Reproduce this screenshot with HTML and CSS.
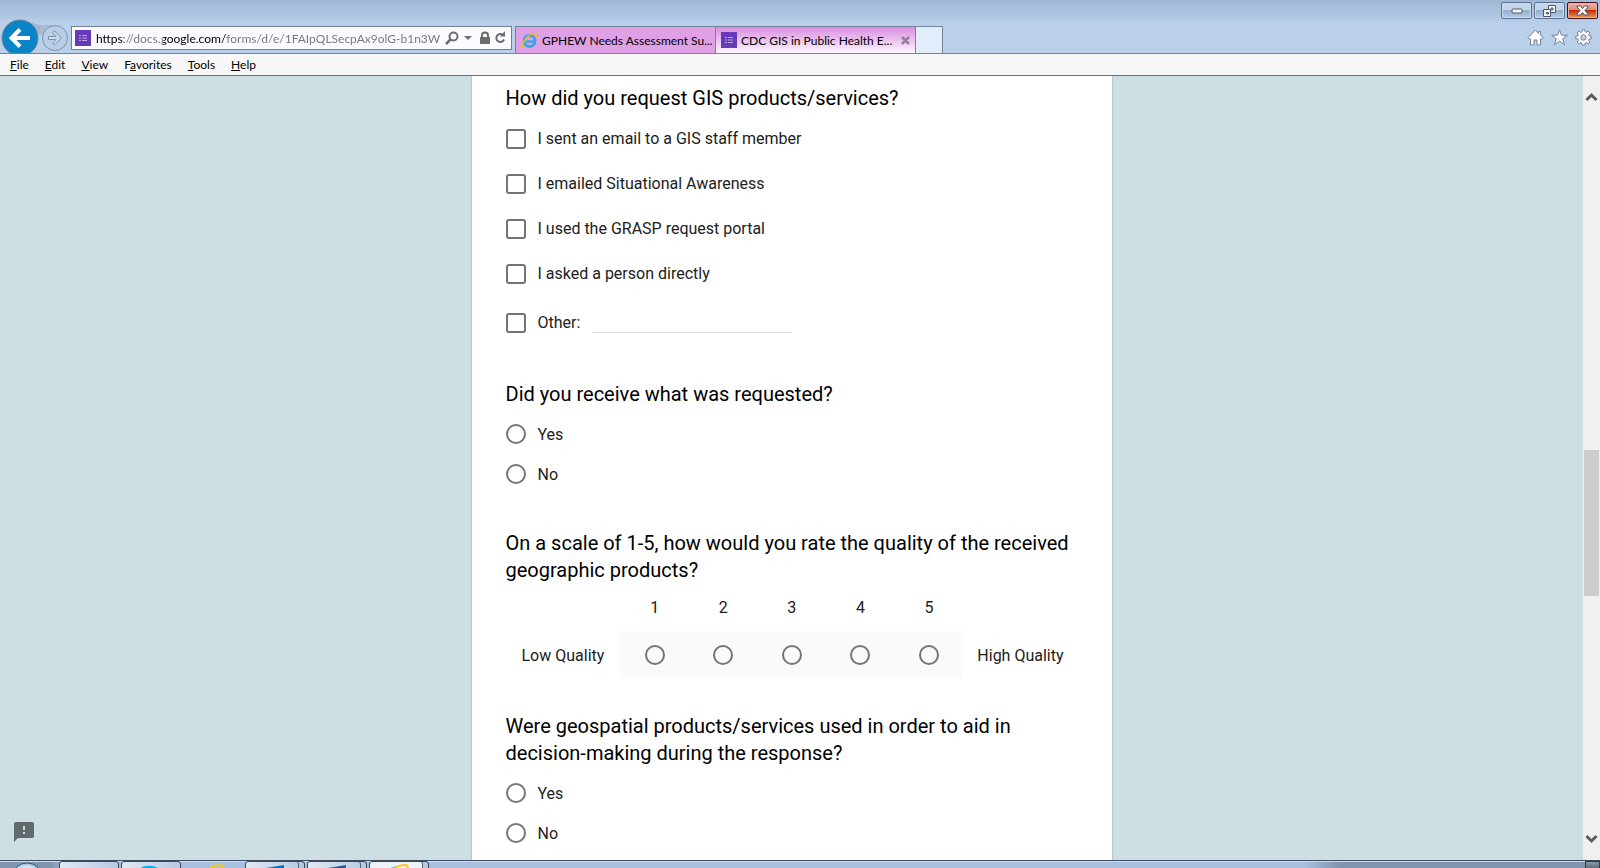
FILE: index.html
```html
<!DOCTYPE html>
<html lang="en">
<head>
    <meta charset="UTF-8">
    <meta name="viewport" content="width=device-width, initial-scale=1.0">
    <title>CDC GIS in Public Health Emergency</title>
    <link rel="stylesheet" href="styles.css">
</head>
<body>
    <header class="frame">
        <div class="window-buttons">
            <button class="win-btn" aria-label="Minimize">
                <svg width="12" height="6" viewBox="0 0 12 6"><rect x="1" y="1" width="10" height="4" rx="1" fill="#f6f6f6" stroke="#535666"/></svg>
            </button>
            <button class="win-btn" aria-label="Restore">
                <svg width="13" height="12" viewBox="0 0 13 12"><g fill="#f6f6f6" stroke="#535666"><path fill-rule="evenodd" d="M5.500 .5h7v7h-7zM8 3h2v2H8z"/><path d="M.5 4.500h7v7h-7z"/><path fill="#8fa9c5" d="M3.500 7.500h2v1.500h-2z"/></g></svg>
            </button>
            <button class="win-btn win-close" aria-label="Close">
                <svg width="13" height="11" viewBox="0 0 13 11"><path d="M1 1h3.500l2 2.500L8.500 1H12v1L9 5.500 12 9v1H8.500l-2-2.500-2 2.500H1V9l3-3.500L1 2z" fill="#f6f6f6" stroke="#535666"/></svg>
            </button>
        </div>
        <div class="nav-row">
            <button class="nav-btn" aria-label="Back">
                <svg width="40" height="34" viewBox="0 0 40 34">
                    <path d="M30 3q4 2 10 3v10z" fill="#a3b6cb"/>
                    <circle cx="20" cy="19" r="18" fill="#0a84c6" stroke="#6d8299"/>
                    <path d="M30 19H12M20 10.500 11.500 19l8.500 8.500" fill="none" stroke="#fff" stroke-width="4"/>
                </svg>
            </button>
            <button class="nav-btn" aria-label="Forward">
                <svg width="31" height="34" viewBox="0 0 31 34">
                    <path d="M0 6h12L3 16H0z" fill="#a9bcd3"/>
                    <circle cx="15" cy="19" r="12.500" fill="#b9cde6" stroke="#7f91a8"/>
                    <path d="M8.500 17.500h7.500l-3.500-4 2-1.500 7 7-7 7-2-1.500 3.500-4H8.500z" fill="#c9daee" stroke="#7f91a8"/>
                </svg>
            </button>
            <div class="address-bar">
                <svg width="16" height="16" viewBox="0 0 16 16"><path fill="#673ab7" d="M0 0h16v16H0z"/><path d="M4 5.500h2M7 5.500h5M4 8h2M7 8h5M4 10.500h2M7 10.500h5" stroke="#b9a3e0"/></svg>
                <input class="url" type="text" aria-label="Address" value="https://docs.google.com/forms/d/e/1FAIpQLSecpAx9olG-b1n3W">
                <button class="bar-btn" aria-label="Search">
                    <svg width="14" height="14" viewBox="0 0 14 14" fill="none" stroke="#6d6d6d" stroke-width="2"><circle cx="8.500" cy="5.500" r="4"/><path d="M5.500 8.500 1 13" stroke-width="2.500"/></svg>
                </button>
                <button class="bar-btn" aria-label="Show address bar list">
                    <svg width="18" height="14" viewBox="0 0 18 14"><path d="M5 5h8l-4 4z" fill="#6d6d6d"/></svg>
                </button>
                <button class="bar-btn" aria-label="Security report">
                    <svg width="16" height="14" viewBox="0 0 16 14"><path d="M3 6h10v7H3z" fill="#6d6d6d"/><path d="M5 7V4.500a3 3 0 0 1 6 0V7" fill="none" stroke="#6d6d6d" stroke-width="2"/></svg>
                </button>
                <button class="bar-btn" aria-label="Refresh">
                    <svg width="14" height="14" viewBox="0 0 14 14"><path d="M10 4A4 4 0 1 0 11 8.500" fill="none" stroke="#6d6d6d" stroke-width="2"/><path d="M7 5.500h5V0z" fill="#6d6d6d"/></svg>
                </button>
            </div>
            <nav class="tabs">
                <button class="tab">
                    <svg width="17" height="17" viewBox="0 0 17 17"><circle cx="8.500" cy="9" r="5.500" fill="none" stroke="#3fa4e0" stroke-width="3"/><path d="M5 9.500h10" stroke="#3fa4e0" stroke-width="2.500"/><path d="M2 15.500C-.5 12 7 1 15 1.500q2 1 .5 4" fill="none" stroke="#f4b91c" stroke-width="1.500"/></svg>
                    <span>GPHEW Needs Assessment Su...</span>
                </button>
                <button class="tab tab-active">
                    <svg width="16" height="16" viewBox="0 0 16 16"><path fill="#673ab7" d="M0 0h16v16H0z"/><path d="M4 5.500h2M7 5.500h5M4 8h2M7 8h5M4 10.500h2M7 10.500h5" stroke="#b9a3e0"/></svg>
                    <span>CDC GIS in Public Health E...</span>
                    <svg class="tab-close" width="9" height="9" viewBox="0 0 9 9"><path d="m1 1 7 7M8 1 1 8" stroke="#95809b" stroke-width="2.500"/></svg>
                </button>
                <button class="new-tab" aria-label="New tab"></button>
            </nav>
            <div class="tools">
                <button class="bar-btn" aria-label="Home">
                    <svg width="17" height="17" viewBox="0 0 17 17"><path d="M8.500 1 1 8.500l1 1.500h1.500v6H7v-5h3v5h3.500v-6H15l1-1.500-2.500-2.500V2.500h-2v2z" fill="#fff" stroke="#74869b"/></svg>
                </button>
                <button class="bar-btn" aria-label="Favorites">
                    <svg width="17" height="17" viewBox="0 0 17 17"><path d="m8.500.8 2 5.400h5.800l-4.600 3.500 1.800 6-5-3.700-5 3.700 1.800-6L.7 6.200h5.800z" fill="#fff" stroke="#74869b"/></svg>
                </button>
                <button class="bar-btn" aria-label="Settings">
                    <svg width="17" height="17" viewBox="0 0 17 17"><path d="M7 .8h3v2l1.500.6L13 2l2 2-1.400 1.500.6 1.500h2v3h-2l-.6 1.500L15 13l-2 2-1.500-1.400-1.500.6v2H7v-2l-1.500-.6L4 15l-2-2 1.400-1.500L2.800 10h-2V7h2l.6-1.500L2 4l2-2 1.500 1.400L7 2.800z" fill="#fff" stroke="#74869b"/><circle cx="8.500" cy="8.500" r="2.700" fill="#b9cfea" stroke="#74869b"/></svg>
                </button>
            </div>
        </div>
    </header>

    <nav class="menu-bar">
        <button><u>F</u>ile</button>
        <button><u>E</u>dit</button>
        <button><u>V</u>iew</button>
        <button>F<u>a</u>vorites</button>
        <button><u>T</u>ools</button>
        <button><u>H</u>elp</button>
    </nav>

    <div class="viewport">
        <main class="page">
            <form class="card">
                <section class="question">
                    <h2>How did you request GIS products/services?</h2>
                    <div class="checks">
                        <label><input type="checkbox" name="request">I sent an email to a GIS staff member</label>
                        <label><input type="checkbox" name="request">I emailed Situational Awareness</label>
                        <label><input type="checkbox" name="request">I used the GRASP request portal</label>
                        <label><input type="checkbox" name="request">I asked a person directly</label>
                        <div class="other">
                            <label><input type="checkbox" name="request">Other:</label>
                            <input type="text" class="other-text" aria-label="Other response">
                        </div>
                    </div>
                </section>

                <section class="question">
                    <h2>Did you receive what was requested?</h2>
                    <div class="radios">
                        <label><input type="radio" name="received">Yes</label>
                        <label><input type="radio" name="received">No</label>
                    </div>
                </section>

                <section class="question">
                    <h2>On a scale of 1-5, how would you rate the quality of the received geographic products?</h2>
                    <div class="scale">
                        <span class="scale-end">Low Quality</span>
                        <label class="step"><span>1</span><span class="dot"><input type="radio" name="quality"></span></label>
                        <label class="step"><span>2</span><span class="dot"><input type="radio" name="quality"></span></label>
                        <label class="step"><span>3</span><span class="dot"><input type="radio" name="quality"></span></label>
                        <label class="step"><span>4</span><span class="dot"><input type="radio" name="quality"></span></label>
                        <label class="step"><span>5</span><span class="dot"><input type="radio" name="quality"></span></label>
                        <span class="scale-end scale-high">High Quality</span>
                    </div>
                </section>

                <section class="question">
                    <h2>Were geospatial products/services used in order to aid in decision-making during the response?</h2>
                    <div class="radios">
                        <label><input type="radio" name="decision">Yes</label>
                        <label><input type="radio" name="decision">No</label>
                    </div>
                </section>
            </form>
            <button class="report" aria-label="Report a problem">
                <svg width="20" height="20" viewBox="0 0 20 20"><path fill="#616a6c" fill-rule="evenodd" d="M2 0h16a2 2 0 0 1 2 2v12a2 2 0 0 1-2 2H4l-4 4V2a2 2 0 0 1 2-2zM9 4v4h2V4zM9 10v2h2v-2z"/></svg>
            </button>
        </main>
        <div class="scrollbar">
            <svg width="13" height="10" viewBox="0 0 13 10"><path d="m1.500 8 5-5 5 5" fill="none" stroke="#5c5c5c" stroke-width="3"/></svg>
            <div class="track"><div class="thumb"></div></div>
            <svg width="13" height="10" viewBox="0 0 13 10"><path d="m1.500 2 5 5 5-5" fill="none" stroke="#5c5c5c" stroke-width="3"/></svg>
        </div>
    </div>

    <footer class="taskbar">
        <button class="start" aria-label="Start">
            <svg width="30" height="7" viewBox="0 0 30 7"><ellipse cx="15" cy="13" rx="14" ry="12" fill="#a9c6d8" stroke="#245b86"/><path d="M4 7q11-8 22 0" fill="#d0e2ea"/></svg>
        </button>
        <button class="task" aria-label="File Explorer">
            <svg width="18" height="6" viewBox="0 0 18 6"><path d="M1 5h14v1H1z" fill="#d0b878"/></svg>
        </button>
        <button class="task" aria-label="Skype">
            <svg width="22" height="6" viewBox="0 0 22 6"><path d="M1 6q0-3 6-3 6-1 13 3z" fill="#00aff0"/><path d="M7 6q4-2 8 0z" fill="#fff"/></svg>
        </button>
        <button class="task task-plain" aria-label="Internet Explorer">
            <svg width="22" height="6" viewBox="0 0 22 6"><path d="M4 6q4-3 8-3l-2 3z" fill="#3fa4e0"/><path d="M6 6q6-4 13-4 3 1 1 4" fill="none" stroke="#fbc81b" stroke-width="2"/></svg>
        </button>
        <button class="task task-stack" aria-label="Outlook">
            <svg width="20" height="6" viewBox="0 0 20 6"><path d="M1 5 19 2v4H1z" fill="#0072c6"/></svg>
        </button>
        <button class="task task-stack" aria-label="Word">
            <svg width="20" height="6" viewBox="0 0 20 6"><path d="M1 5 19 2v4H1z" fill="#2b579a"/></svg>
        </button>
        <button class="task task-stack task-current" aria-label="Internet Explorer, current window">
            <svg width="22" height="6" viewBox="0 0 22 6"><path d="M1 6q5-3 9-3l-2 3z" fill="#3fa4e0"/><path d="M5 6q6-4 13-4 3 1 1 4" fill="none" stroke="#fbc81b" stroke-width="2"/></svg>
        </button>
        <button class="show-desktop" aria-label="Show desktop"></button>
    </footer>
</body>
</html>
```

FILE: styles.css
```css
* {
    box-sizing: border-box;
}
body {
    margin: 0;
    height: 100vh;
    display: flex;
    flex-direction: column;
    overflow: hidden;
    font-family: Roboto, Arial, sans-serif;
}
button {
    margin: 0;
    padding: 0;
    border: 0;
    background: none;
    font: inherit;
    color: inherit;
}
svg {
    display: block;
    flex: none;
}

/* browser frame */
.frame {
    padding-top: 2px;
    background: linear-gradient(#9fb9d5, #b9cfea 24px);
    border-bottom: 1px solid #74849a;
    font: 12px Lato, "Segoe UI", sans-serif;
}
.window-buttons {
    display: flex;
    justify-content: flex-end;
    gap: 2px;
    height: 17px;
    padding-right: 2px;
}
.win-btn {
    display: flex;
    align-items: center;
    justify-content: center;
    width: 31px;
    border: 1px solid #5d7290;
    border-radius: 2px;
    background: linear-gradient(#c3d5e8 48%, #94afcc 50%, #b4cde6);
    box-shadow: inset 0 0 0 1px #cbdbec;
}
.win-close {
    border-color: #42121f;
    background: linear-gradient(#f3b5a8, #e08672 48%, #c42a0c 50%, #e8a050);
    box-shadow: inset 0 0 0 1px #f0b0a0;
}
.nav-row {
    display: flex;
    height: 34px;
}
.address-bar {
    display: flex;
    align-items: center;
    width: 441px;
    height: 24px;
    margin: 7px 3px 0 0;
    padding: 0 4px 0 3px;
    border: 1px solid #6f8096;
    background: #f9fbff;
}
.url {
    flex: 1;
    min-width: 0;
    height: 20px;
    margin-left: 5px;
    padding: 0;
    border: 0;
    outline: 0;
    font: inherit;
    color: transparent;
    /* scheme and domain are dark, the rest of the address is grey */
    background: linear-gradient(to right, #000 28px, #767676 28px 67px, #000 67px 131px, #767676 131px);
    -webkit-background-clip: text;
    background-clip: text;
}
.tabs {
    display: flex;
    height: 27px;
    margin-top: 7px;
    border: 1px solid #74849a;
    border-bottom: 0;
}
.tab {
    display: flex;
    align-items: center;
    gap: 4px;
    width: 200px;
    padding: 0 5px;
    border-right: 1px solid #74849a;
    background: #dfa0e5;
    color: #000;
    white-space: nowrap;
}
.tab-active {
    background: linear-gradient(#d98de0, #fdf6fe);
}
.tab-close {
    margin-left: auto;
}
.new-tab {
    width: 26px;
    background: #e1edf9;
}
.tools {
    display: flex;
    gap: 7px;
    margin: 10px 8px 0 auto;
    height: 17px;
}

.menu-bar {
    display: flex;
    gap: 16px;
    height: 22px;
    padding: 0 10px;
    border-bottom: 1px solid #6c6c72;
    background: #f7f7f7;
    font: 12px Lato, "Segoe UI", sans-serif;
}

/* page */
.viewport {
    flex: 1;
    min-height: 0;
    display: flex;
}
.page {
    position: relative;
    flex: 1;
    overflow: hidden;
    background: #cddfe3;
}
.card {
    max-width: 640px;
    min-height: 100%;
    margin: 0 auto;
    padding: 9px 34px 32px;
    background: #fff;
    box-shadow: 0 0 2px rgba(0, 0, 0, 0.3);
    font-size: 16px;
    color: #212121;
}
.question {
    margin-bottom: 32px;
}
.question h2 {
    margin: 0 0 4px;
    font-size: 20px;
    font-weight: 400;
    line-height: 27px;
    color: #000;
}
.checks label,
.radios label {
    display: flex;
    align-items: center;
    gap: 12px;
    height: 45px;
}
.radios {
    padding: 2px 0 4px;
}
.radios label {
    height: 40px;
}
input[type="checkbox"],
input[type="radio"] {
    appearance: none;
    flex: none;
    width: 20px;
    height: 20px;
    margin: 0;
    border: 2px solid #757575;
    border-radius: 3px;
}
input[type="radio"] {
    border-radius: 50%;
}
input:checked {
    background: #757575;
    box-shadow: inset 0 0 0 3px #fff;
}
.other {
    display: flex;
    align-items: center;
    gap: 12px;
    height: 53px;
}
.other-text {
    width: 200px;
    height: 20px;
    padding: 0;
    border: 0;
    border-bottom: 1px solid #dedede;
    outline: 0;
    font: inherit;
}
.scale {
    display: flex;
    align-items: flex-end;
    padding-bottom: 2px;
}
.scale-end {
    padding: 0 16px;
    line-height: 46px;
}
.scale-high {
    padding: 0 14px;
}
.step {
    flex: 1;
    text-align: center;
    line-height: 40px;
}
.dot {
    display: flex;
    align-items: center;
    justify-content: center;
    height: 48px;
    margin-top: 3px;
    background: #fafafa;
}
.report {
    position: absolute;
    left: 14px;
    bottom: 18px;
}

.scrollbar {
    display: flex;
    flex-direction: column;
    align-items: center;
    width: 17px;
    padding: 16px 0;
    background: #f0f0f0;
}
.track {
    flex: 1;
    width: 15px;
}
.thumb {
    height: 20%;
    margin-top: 348px;
    background: #cdcdcd;
}

/* taskbar, mostly hidden below the window */
.taskbar {
    display: flex;
    height: 8px;
    overflow: hidden;
    border-top: 1px solid #3e4b5e;
    box-shadow: inset 0 1px #cbdcf0;
    background: linear-gradient(to right, #8095ae 50px, #a7c0df 70px 1305px, #8094ae 1340px);
}
.start {
    width: 30px;
    margin: 1px 17px 0 12px;
}
.task {
    display: flex;
    justify-content: center;
    width: 60px;
    height: 12px;
    margin-right: 2px;
    border: 1px solid #3b4657;
    border-radius: 3px;
    background: linear-gradient(to right, #e0e8f2, #b5cae4);
    padding-top: 1px;
}
.task-plain {
    border-color: transparent;
    background: none;
}
.task-stack {
    box-shadow: inset -5px 0 #b4c8e0, inset -6px 0 #55657a;
}
.task-current {
    background: #eef3fa;
}
.show-desktop {
    width: 15px;
    margin-left: auto;
    border: 1px solid #2f3b49;
    border-bottom: 0;
    background: linear-gradient(#8b9aa5, #5f6e7c);
}
```
